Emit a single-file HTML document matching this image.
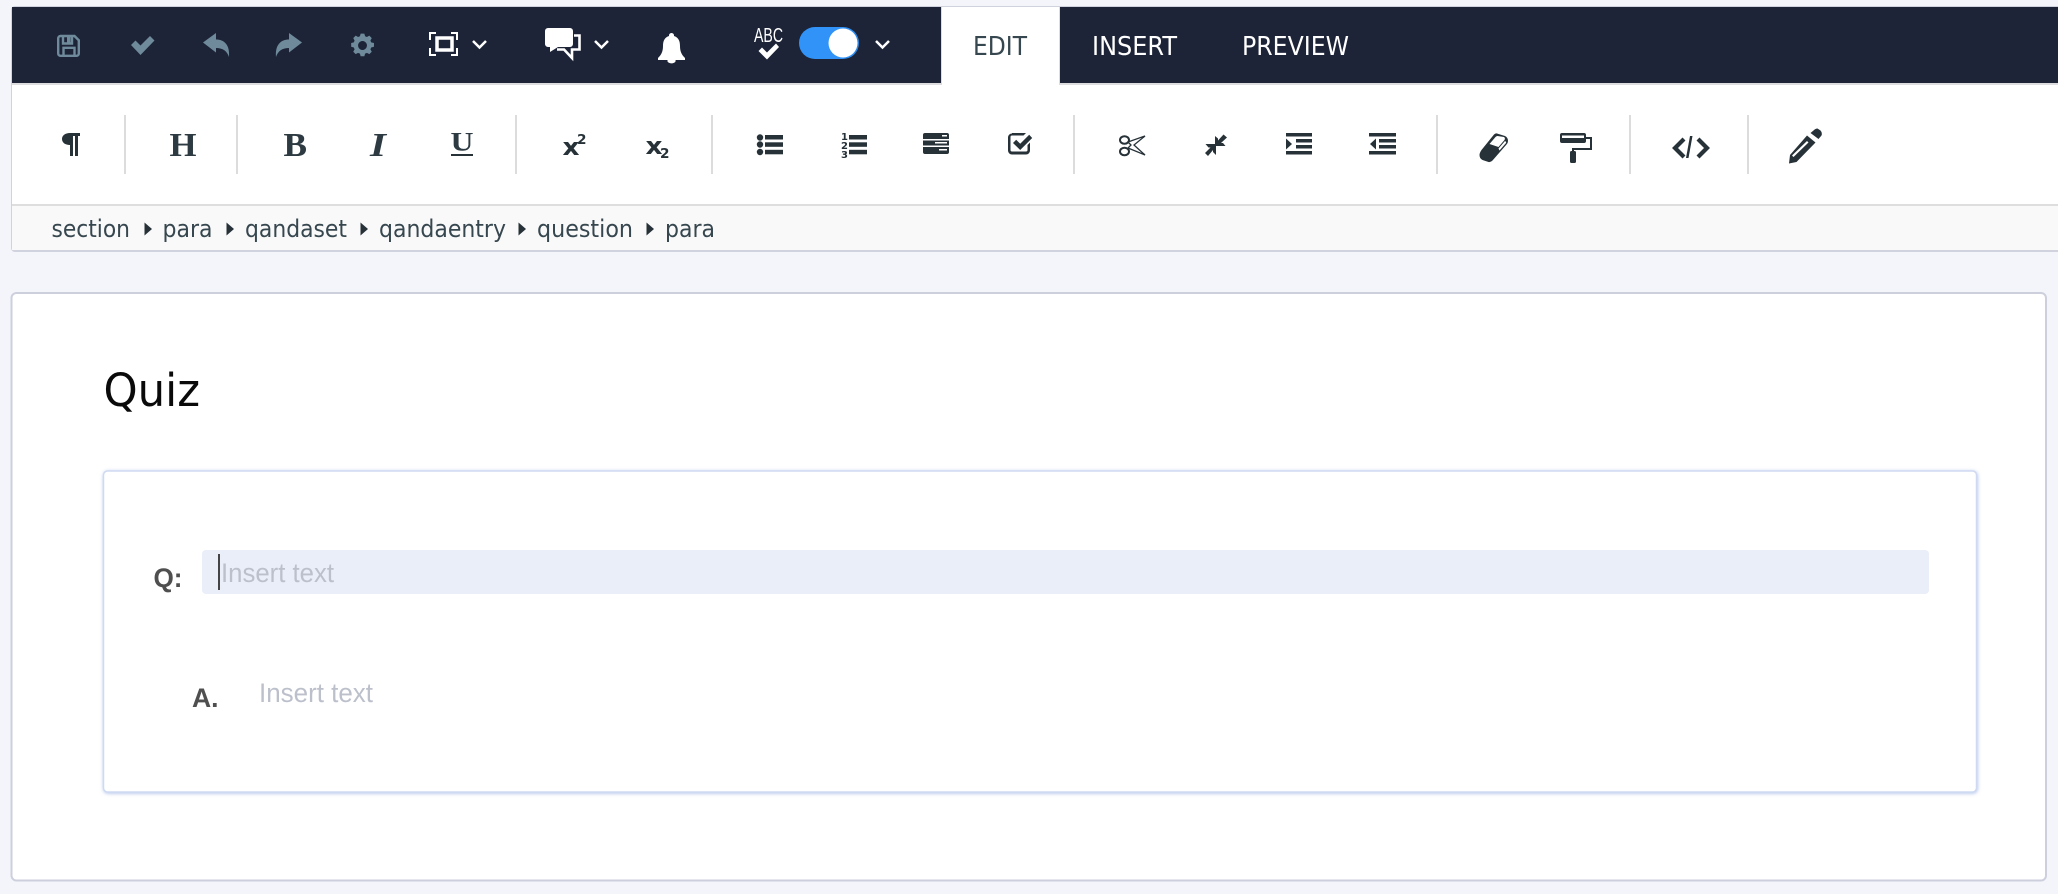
<!DOCTYPE html>
<html><head><meta charset="utf-8"><title>Quiz</title>
<style>
html,body{margin:0;padding:0;width:2058px;height:894px;overflow:hidden;background:#f3f5fb}
svg{display:block}
.u{font-family:"DejaVu Sans",sans-serif}
.l{font-family:"Liberation Sans",sans-serif}
.s{font-family:"Liberation Serif",serif;font-weight:bold;fill:#263238}
</style></head><body>
<svg width="2058" height="894" viewBox="0 0 2058 894" xmlns="http://www.w3.org/2000/svg">
<defs>
<filter id="sh" x="-5%" y="-5%" width="110%" height="110%"><feDropShadow dx=".5" dy=".8" stdDeviation="1.8" flood-color="#a9bde8" flood-opacity=".9"/></filter>
</defs>
<rect width="2058" height="894" fill="#f3f5fb"/>
<!-- toolbar frame -->
<path d="M11 248V10a4 4 0 0 1 4-4H2058V252H15a4 4 0 0 1-4-4Z" fill="#d0d2de"/>
<rect x="12" y="7" width="2046" height="243" fill="#fff"/>
<rect x="12" y="7" width="2046" height="76" fill="#1d2438"/>
<rect x="12" y="83" width="2046" height="2" fill="#dddde0"/>
<rect x="12" y="204" width="2046" height="2" fill="#dedede"/>
<rect x="12" y="206" width="2046" height="44" fill="#f9f9f9"/>
<!-- edit tab -->
<rect x="941" y="7" width="119" height="78" fill="#dddde0"/>
<rect x="942" y="7" width="117" height="78" fill="#fff"/>
<text class="u" x="973" y="55" font-size="26" fill="#37474f" textLength="54" lengthAdjust="spacingAndGlyphs">EDIT</text>
<text class="u" x="1092" y="55" font-size="26" fill="#fff" textLength="85" lengthAdjust="spacingAndGlyphs">INSERT</text>
<text class="u" x="1242" y="55" font-size="26" fill="#fff" textLength="107" lengthAdjust="spacingAndGlyphs">PREVIEW</text>

<!-- top icons disabled -->
<g fill="none" stroke="#6f8b9b" stroke-width="2.400">
<path d="M60 36h14.500l4.300 4.300V53.500a2.300 2.300 0 0 1-2.300 2.300H60.500a2.300 2.300 0 0 1-2.300-2.300V38.300A2.300 2.300 0 0 1 60.500 36Z"/>
<path d="M63.500 55.500V47.800h11V55.500"/>
<path d="M63 37v6.500h9V37"/>
</g>
<g fill="#6f8b9b">
<rect x="67" y="36" width="3.500" height="6.500"/>
<path d="M131 45l4.500-4.500 5 5 9.500-9.500 4.500 4.500-14 14.500Z"/>
<path d="M203 42.500L216 33v6.500c8 0 14 5 13 17.500c-2-6-6-9-13-9v4.500Z"/>
<path d="M302 42.500L289 33v6.500c-8 0-14 5-13 17.500c2-6 6-9 13-9v4.500Z"/>
<path fill-rule="evenodd" transform="translate(362.5 45.5) scale(.74) translate(-362.5 -47)" d="M360 31h5l1 3.500 2.500 1 3.200-1.800 3.300 3.300-1.800 3.200 1 2.500 3.800 1v5l-3.800 1-1 2.500 1.800 3.200-3.300 3.300-3.200-1.800-2.500 1-1 3.600h-5l-1-3.600-2.500-1-3.200 1.800-3.300-3.300 1.800-3.200-1-2.500-3.600-1v-5l3.600-1 1-2.500-1.800-3.200 3.300-3.300 3.200 1.800 2.500-1ZM362.500 41a6 6 0 1 0 .01 0Z"/>
</g>
<!-- fullscreen -->
<g fill="none" stroke="#fff" stroke-width="2">
<path d="M436 33h-6v7M451 33h6v7M436 55h-6v-7M451 55h6v-7"/>
</g>
<rect x="437" y="38" width="15" height="12" fill="none" stroke="#fff" stroke-width="3.500"/>
<!-- chevrons -->
<g fill="none" stroke="#fff" stroke-width="2.500">
<path d="M473 41l6.500 6.500L486 41M595 41l6.500 6.500L608 41M876 41l6.500 6.500L889 41"/>
</g>
<!-- comments -->
<path fill="#fff" d="M548 28h22a3 3 0 0 1 3 3v13a3 3 0 0 1-3 3h-12l-8 5v-5h-2a3 3 0 0 1-3-3V31a3 3 0 0 1 3-3Z"/>
<path fill="none" stroke="#fff" stroke-width="2.600" d="M574 35.500h5.500V49.500h-7.500V58l-8-8.500h-7"/>
<!-- bell -->
<path fill="#fff" d="M671.500 33a2.500 2.500 0 0 1 2.500 3c4.500 1.500 6 5 6 10 0 6 2 9 5 12v2h-27v-2c3-3 5-6 5-12 0-5 1.500-8.500 6-10a2.500 2.500 0 0 1 2.500-3Z"/>
<path fill="#fff" d="M667.500 60h8a4 2.500 0 0 1-8 1.500Z"/>
<!-- spell -->
<text class="l" x="754" y="42" font-size="20" fill="#fff" textLength="29" lengthAdjust="spacingAndGlyphs">ABC</text>
<path fill="#fff" d="M758.500 51l3.500-3.500 5 5 9-9 3 3.500-12 12.500Z"/>
<!-- toggle -->
<rect x="799" y="27" width="60" height="32" rx="16" fill="#3193f8"/>
<path d="M843 58.500a15.500 15.500 0 0 0 0-31h3a16 16 0 0 1 0 31Z" fill="#2474c8"/>
<circle cx="843" cy="43" r="14.500" fill="#fff"/>

<!-- separators -->
<g fill="#dcdcdc">
<rect x="124" y="115" width="2" height="59"/><rect x="236" y="115" width="2" height="59"/>
<rect x="515" y="115" width="2" height="59"/><rect x="711" y="115" width="2" height="59"/>
<rect x="1073" y="115" width="2" height="59"/><rect x="1436" y="115" width="2" height="59"/>
<rect x="1629" y="115" width="2" height="59"/><rect x="1747" y="115" width="2" height="59"/>
</g>
<!-- toolbar icons -->
<g fill="#263238">
<path fill-rule="evenodd" d="M70 133h10v3h-2v20h-3v-20h-2v20h-3v-11c-5 0-8-2.500-8-6s3-6 8-6Z"/>
</g>
<text class="s" x="169.500" y="156" font-size="34" textLength="27" lengthAdjust="spacingAndGlyphs" style="font-weight:bold;fill:#2d3a41">H</text>
<text class="s" x="283.500" y="156" font-size="34" textLength="23.500" lengthAdjust="spacingAndGlyphs" style="fill:#2d3a41">B</text>
<text class="s" x="370" y="156" font-size="34" font-style="italic" textLength="16" lengthAdjust="spacingAndGlyphs" style="fill:#2d3a41">I</text>
<text class="s" x="450.500" y="150.500" font-size="26" textLength="23" lengthAdjust="spacingAndGlyphs" style="fill:#2d3a41">U</text>
<rect x="451" y="154" width="22" height="2" fill="#263238"/>
<text x="562.500" y="155" font-family="DejaVu Sans" font-weight="bold" font-size="24" fill="#263238" textLength="17" lengthAdjust="spacingAndGlyphs">x</text>
<text x="577" y="144" font-family="DejaVu Sans" font-weight="bold" font-size="13" fill="#263238" textLength="9.500" lengthAdjust="spacingAndGlyphs">2</text>
<text x="645.500" y="154" font-family="DejaVu Sans" font-weight="bold" font-size="24" fill="#263238" textLength="17" lengthAdjust="spacingAndGlyphs">x</text>
<text x="660" y="158" font-family="DejaVu Sans" font-weight="bold" font-size="13" fill="#263238" textLength="9.500" lengthAdjust="spacingAndGlyphs">2</text>
<g fill="#263238">
<!-- bullets -->
<circle cx="760" cy="137.500" r="3.200"/><circle cx="760" cy="144.500" r="3.200"/><circle cx="760" cy="152" r="3.200"/>
<rect x="765" y="135" width="18" height="4.500"/><rect x="765" y="142.300" width="18" height="4.500"/><rect x="765" y="149.800" width="18" height="4.500"/>
<!-- numbered -->
<rect x="849" y="135" width="18" height="4.500"/><rect x="849" y="142.300" width="18" height="4.500"/><rect x="849" y="149.800" width="18" height="4.500"/>
<!-- def list -->
<path fill-rule="evenodd" d="M925 133h22a2 2 0 0 1 2 2v4h-26v-4a2 2 0 0 1 2-2Zm17 2v1.500h5V135ZM923 140.500h26v5h-26Zm12 1.500v1.500h12V142ZM923 147h26v5a2 2 0 0 1-2 2h-22a2 2 0 0 1-2-2Zm16 2v1.500h8V149Z"/>
<!-- checkbox -->
<path fill-rule="evenodd" d="M1012 133h14l-2.500 2.500H1012a1.500 1.500 0 0 0-1.500 1.500v13a1.500 1.500 0 0 0 1.500 1.500h14a1.500 1.500 0 0 0 1.500-1.500v-5l2.500-2.500v8a4 4 0 0 1-4 4h-14a4 4 0 0 1-4-4v-13a4 4 0 0 1 4-4Z"/>
<path d="M1013 143l3.200-3.200 4 4 9-9 3 3.200-12 12Z"/>
<!-- compress -->
<path d="M1215 136l3 2.500v2l5.500-6 3.500 3-6 5.500h2l2.500 3h-10.500Z"/>
<path d="M1216 144v11l-3-3v-2l-5 6-3-3 5.500-5.500h-2l-3-3.500Z"/>
<!-- indent -->
<rect x="1286" y="133" width="26" height="3.500"/><rect x="1296" y="139" width="16" height="3.500"/><rect x="1296" y="145" width="16" height="3.500"/><rect x="1286" y="151" width="26" height="3.500"/>
<path d="M1286 138.500l6 5.500-6 5.500Z"/>
<!-- outdent -->
<rect x="1369" y="133" width="27" height="3.500"/><rect x="1379" y="139" width="17" height="3.500"/><rect x="1379" y="145" width="17" height="3.500"/><rect x="1369" y="151" width="27" height="3.500"/>
<path d="M1376 138.500l-6 5.500 6 5.500Z"/>
<!-- eraser -->
<path fill-rule="evenodd" d="M1497 133.500l8 2.500q3 1.500 3 5 0 2-1.500 3.500l-14 16q-2 2-4 1.500l-6-2q-3-1.500-3-5 0-2 2-5l12.500-15.500q1.500-1.500 3.500-1Zm.5 2.500q-1 0-2 1l-6 7 9 3 6-7q1-2-.5-3ZM1505 141l-6.500 7.500q.5 1 1 2l6.500-7.500q.5-1-1-2Z"/>
<!-- roller -->
<rect x="1560" y="133" width="26" height="10" rx="2"/>
<rect x="1562" y="135.500" width="22" height="2.500" fill="#fff"/>
<path fill="none" stroke="#263238" stroke-width="2" d="M1586 138h5v11h-18v5"/>
<rect x="1570" y="151" width="6" height="12" rx="1.500"/>
<!-- code -->
<path fill="none" stroke="#263238" stroke-width="4.200" d="M1684 139l-9 9 9 9M1698 139l9 9-9 9"/>
<path d="M1690 136h2.500l-4 22h-2.500Z" fill="#263238"/>
<!-- pencil -->
<path fill-rule="evenodd" d="M1813.500 133.500q2-2 4-2l3 2q2 2.500 1 5l-3 3.500-8-6ZM1807 138.500l8.500 7-19 19.500-7.500 1.500 1-8.500Zm0 5.500l-15 14.500 1.500 1.500 15-14.500Z" transform="translate(0 -3)"/>
</g>
<text x="841" y="140" font-family="DejaVu Sans" font-weight="bold" font-size="10" fill="#263238">1</text>
<text x="841" y="149" font-family="DejaVu Sans" font-weight="bold" font-size="10" fill="#263238">2</text>
<text x="841" y="158" font-family="DejaVu Sans" font-weight="bold" font-size="10" fill="#263238">3</text>
<!-- scissors -->
<g fill="none" stroke="#263238" stroke-width="2">
<ellipse cx="1124.500" cy="140" rx="4.500" ry="3.800"/>
<ellipse cx="1124.500" cy="151.500" rx="4.500" ry="3.800"/>
</g>
<path d="M1128 142l17-6-11 9 11 10-17-7 3-3Z" fill="#fff" stroke="#263238" stroke-width="1.300"/>

<!-- breadcrumb -->
<g class="u" font-size="24" fill="#37474f">
<text x="51.500" y="237" textLength="78.500" lengthAdjust="spacingAndGlyphs">section</text>
<text x="162.500" y="237" textLength="50" lengthAdjust="spacingAndGlyphs">para</text>
<text x="245" y="237" textLength="102" lengthAdjust="spacingAndGlyphs">qandaset</text>
<text x="379" y="237" textLength="127" lengthAdjust="spacingAndGlyphs">qandaentry</text>
<text x="537" y="237" textLength="96" lengthAdjust="spacingAndGlyphs">question</text>
<text x="665" y="237" textLength="50" lengthAdjust="spacingAndGlyphs">para</text>
</g>
<g fill="#263238">
<path d="M144.500 222.500l7.500 6.500-7.500 6.500Z"/><path d="M226.500 222.500l7.500 6.500-7.500 6.500Z"/><path d="M360.500 222.500l7.500 6.500-7.500 6.500Z"/><path d="M518.500 222.500l7.500 6.500-7.500 6.500Z"/><path d="M646.500 222.500l7.500 6.500-7.500 6.500Z"/>
</g>

<!-- card -->
<rect x="11.500" y="293" width="2034.500" height="587.500" rx="5" fill="#fff" stroke="#cdcfdd" stroke-width="2"/>
<text class="u" x="103.500" y="406" font-size="45" fill="#0a0a0a" textLength="96.500" lengthAdjust="spacingAndGlyphs">Quiz</text>
<!-- inner -->
<rect x="103.500" y="471" width="1873" height="321" rx="4" fill="#fff" stroke="#cfdaf2" stroke-width="1.500" filter="url(#sh)"/>
<rect x="202" y="550" width="1727" height="44" rx="4" fill="#e9eef8"/>
<rect x="218" y="554" width="2" height="36" fill="#444"/>
<text class="l" x="221" y="582" font-size="26.500" fill="#bcc0cb" textLength="113" lengthAdjust="spacingAndGlyphs">Insert text</text>
<text class="l" x="153.500" y="587" font-size="27" font-weight="bold" fill="#4f4f4f" textLength="29" lengthAdjust="spacingAndGlyphs">Q:</text>
<text class="l" x="192" y="707" font-size="27" font-weight="bold" fill="#4f4f4f" textLength="26.500" lengthAdjust="spacingAndGlyphs">A.</text>
<text class="l" x="259" y="702" font-size="26.500" fill="#bcc0cb" textLength="114" lengthAdjust="spacingAndGlyphs">Insert text</text>
</svg>
</body></html>
